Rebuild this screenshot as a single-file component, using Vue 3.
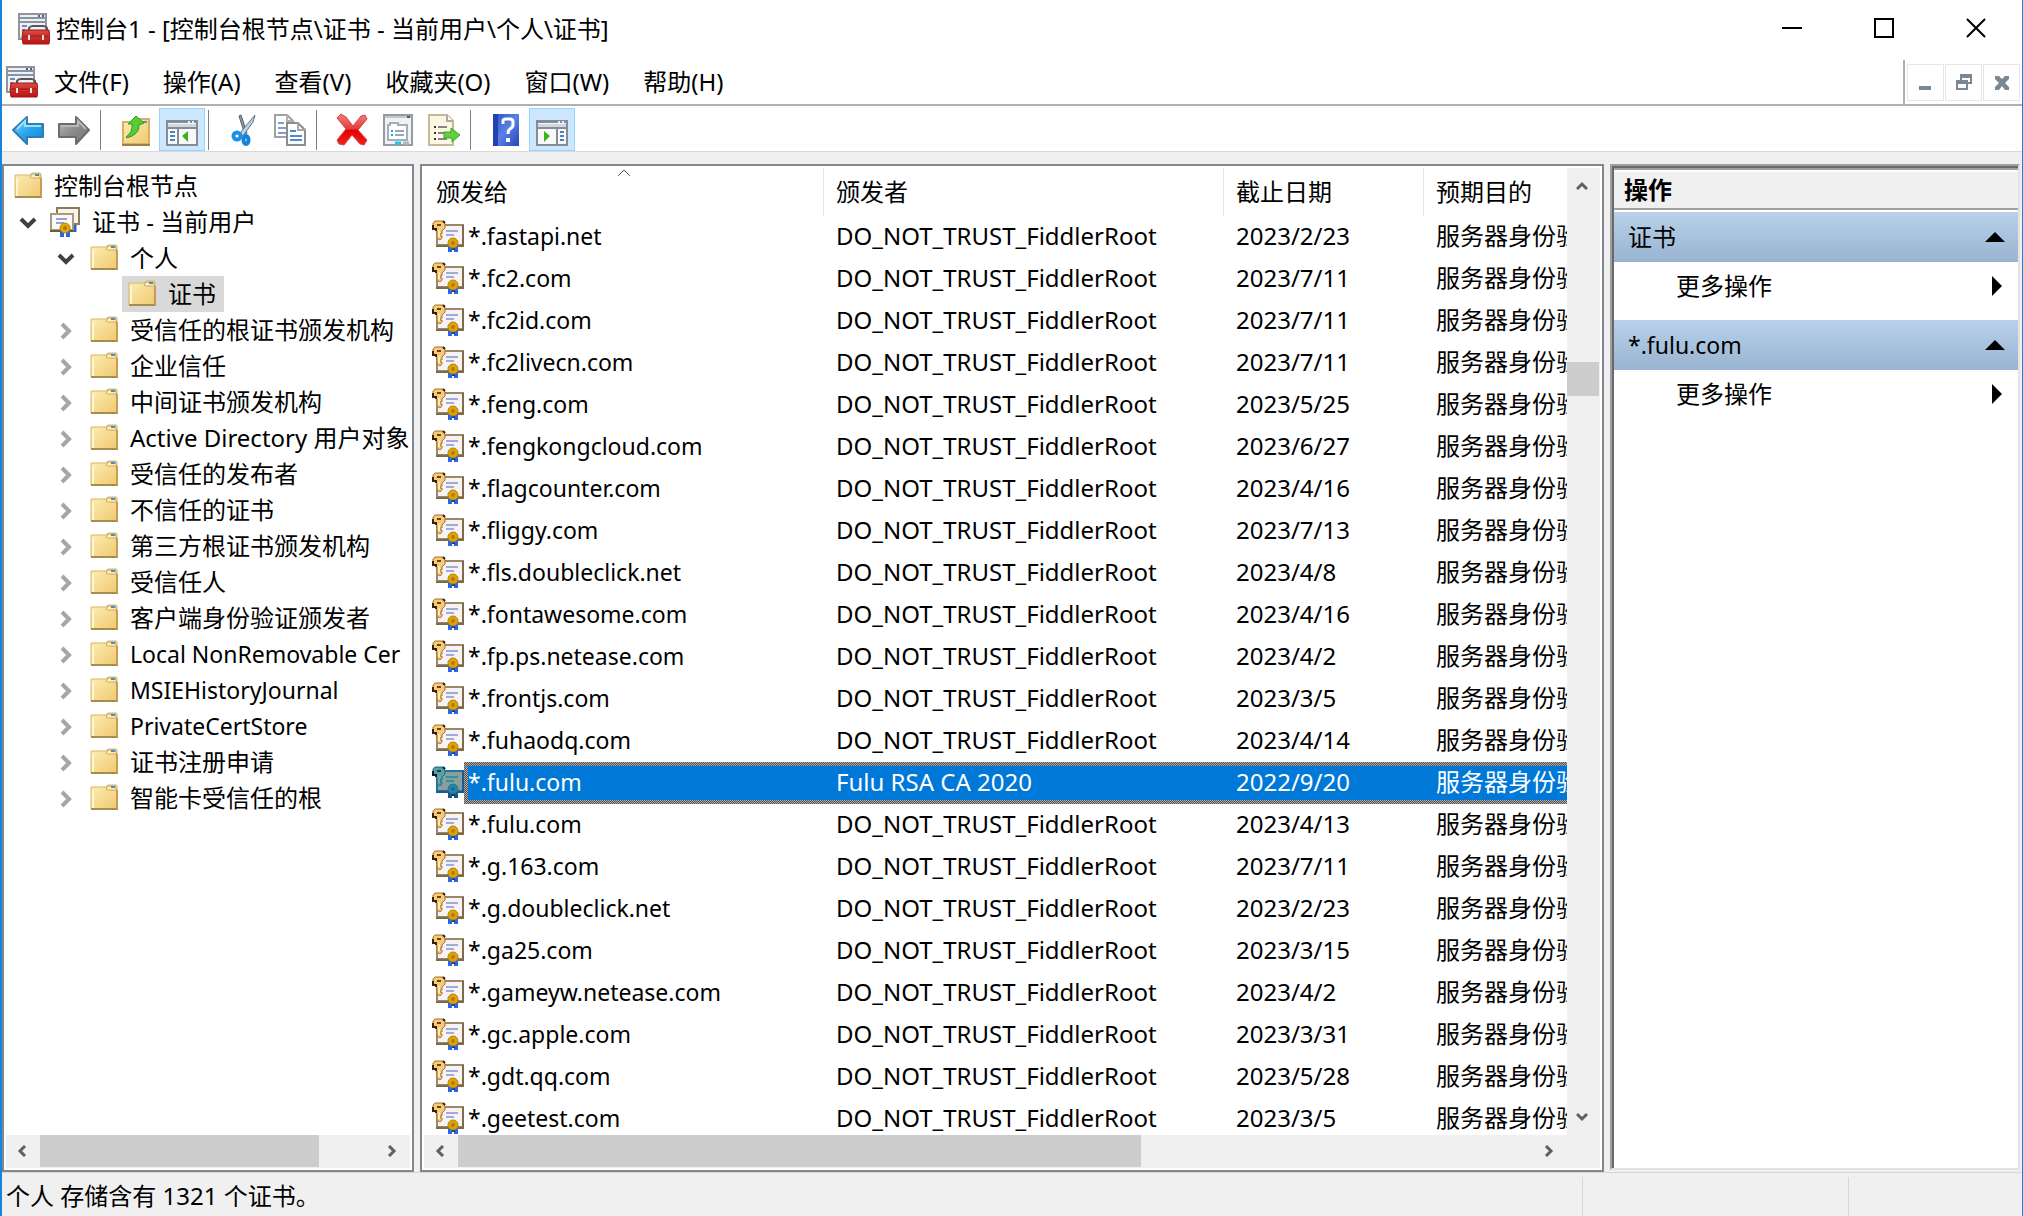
<script setup>
const menus = ['文件(F)', '操作(A)', '查看(V)', '收藏夹(O)', '窗口(W)', '帮助(H)']

const tools = [
  { icon: 'back', label: '后退' },
  { icon: 'forward', label: '前进' },
  { sep: true },
  { icon: 'up', label: '向上' },
  { icon: 'tree-pane', label: '显示/隐藏控制台树', active: true },
  { sep: true },
  { icon: 'cut', label: '剪切' },
  { icon: 'copy', label: '复制' },
  { sep: true },
  { icon: 'delete', label: '删除' },
  { icon: 'props', label: '属性' },
  { icon: 'export', label: '导出列表' },
  { sep: true },
  { icon: 'help', label: '帮助' },
  { icon: 'action-pane', label: '显示/隐藏操作窗格', active: true },
]

const tree = [
  { text: '控制台根节点', level: 0 },
  { text: '证书 - 当前用户', level: 1, open: true, icon: 'certs' },
  { text: '个人', level: 2, open: true },
  { text: '证书', level: 3, selected: true },
  ...[
    '受信任的根证书颁发机构', '企业信任', '中间证书颁发机构', 'Active Directory 用户对象',
    '受信任的发布者', '不信任的证书', '第三方根证书颁发机构', '受信任人', '客户端身份验证颁发者',
    'Local NonRemovable Cer', 'MSIEHistoryJournal', 'PrivateCertStore',
    '证书注册申请', '智能卡受信任的根',
  ].map((text) => ({ text, level: 2, closed: true })),
]

const isLatin = (text) => /^[\x20-\x7e]+$/.test(text)

const root = 'DO_NOT_TRUST_FiddlerRoot'
const certs = [
  ['*.fastapi.net', root, '2023/2/23'],
  ['*.fc2.com', root, '2023/7/11'],
  ['*.fc2id.com', root, '2023/7/11'],
  ['*.fc2livecn.com', root, '2023/7/11'],
  ['*.feng.com', root, '2023/5/25'],
  ['*.fengkongcloud.com', root, '2023/6/27'],
  ['*.flagcounter.com', root, '2023/4/16'],
  ['*.fliggy.com', root, '2023/7/13'],
  ['*.fls.doubleclick.net', root, '2023/4/8'],
  ['*.fontawesome.com', root, '2023/4/16'],
  ['*.fp.ps.netease.com', root, '2023/4/2'],
  ['*.frontjs.com', root, '2023/3/5'],
  ['*.fuhaodq.com', root, '2023/4/14'],
  ['*.fulu.com', 'Fulu RSA CA 2020', '2022/9/20'],
  ['*.fulu.com', root, '2023/4/13'],
  ['*.g.163.com', root, '2023/7/11'],
  ['*.g.doubleclick.net', root, '2023/2/23'],
  ['*.ga25.com', root, '2023/3/15'],
  ['*.gameyw.netease.com', root, '2023/4/2'],
  ['*.gc.apple.com', root, '2023/3/31'],
  ['*.gdt.qq.com', root, '2023/5/28'],
  ['*.geetest.com', root, '2023/3/5'],
]
const selectedRow = 13
const groups = ['证书', '*.fulu.com']
</script>

<template>
  <div class="window">
    <svg class="defs" aria-hidden="true">
      <defs>
        <linearGradient id="g-blue" x1="0" y1="0" x2="1" y2="1"><stop offset="0" stop-color="#8fd8fb" /><stop offset=".5" stop-color="#2ba5ee" /><stop offset="1" stop-color="#1583d2" /></linearGradient>
        <linearGradient id="g-gray" x1="0" y1="0" x2="1" y2="1"><stop offset="0" stop-color="#bdbdbd" /><stop offset=".5" stop-color="#8b8b8b" /><stop offset="1" stop-color="#777" /></linearGradient>
        <linearGradient id="g-folder" x1="0" y1="0" x2="1" y2="1"><stop offset="0" stop-color="#fdeeb5" /><stop offset="1" stop-color="#efc96f" /></linearGradient>
        <linearGradient id="g-red" x1="0" y1="0" x2="0" y2="1"><stop offset="0" stop-color="#f08080" /><stop offset=".48" stop-color="#e53b3b" /><stop offset=".52" stop-color="#e30000" /><stop offset="1" stop-color="#f02020" /></linearGradient>
        <linearGradient id="g-help" x1="0" y1="0" x2="1" y2="1"><stop offset="0" stop-color="#2a50c8" /><stop offset=".5" stop-color="#5b80e6" /><stop offset="1" stop-color="#2444b4" /></linearGradient>
        <linearGradient id="g-box" x1="0" y1="0" x2="0" y2="1"><stop offset="0" stop-color="#dc4a42" /><stop offset="1" stop-color="#b81414" /></linearGradient>
      </defs>
      <symbol id="mmc" viewBox="0 0 32 32">
        <path d="M1 1h27v25H1z" fill="#eef0f3" stroke="#8e959f" stroke-width="2" />
        <path d="M1 5h27M1 9h27" stroke="#8893a3" stroke-width="2" />
        <path d="M20 3h2m2 0h2" stroke="#506080" stroke-width="2" />
        <path d="M4 13h5m-5 4h3" stroke="#6c8cb8" stroke-width="2" />
        <path d="M11 17v-2q1-2 4-2h10q3 0 4 2v2" fill="none" stroke="#555" stroke-width="2" />
        <path d="M5 17h26l1 7-1 7H5l-1-7z" fill="url(#g-box)" stroke="#a01818" />
        <path d="M5 23h26" stroke="#a01616" />
        <path d="M11 22v5M25 22v5" stroke="#e5e5e5" stroke-width="2" />
      </symbol>
      <symbol id="folder" viewBox="0 0 28 26">
        <path d="M1 3h15l2-2h8q1 0 1 2v22H1z" fill="url(#g-folder)" stroke="#d9b566" />
        <path d="M16 5l2-3h8v4h-8z" fill="#fbf1c8" stroke="#d1a75c" />
        <path d="M21 3h4" stroke="#3f8ed0" stroke-width="2" />
        <path d="M3 6v18" stroke="#fff7d4" stroke-width="2" />
        <path d="M1 25h27" stroke="#a78d4d" stroke-width="2" />
        <path d="M27 6v19" stroke="#c49d52" stroke-width="2" />
      </symbol>
      <symbol id="certs" viewBox="0 0 30 30">
        <path d="M7 1h22v16H7z" fill="#f7f4ee" stroke="#8c7a5a" stroke-width="2" />
        <path d="M25 18v7" stroke="#2760d8" stroke-width="3" />
        <path d="M1 7h22v16H1z" fill="#fbfafa" stroke="#ad987a" stroke-width="2" />
        <path d="M0 24h24" stroke="#6e5c3c" stroke-width="2" />
        <path d="M6 12h11M6 16h8" stroke="#95a3d8" stroke-width="2" />
        <path d="M12 24v6m6-6v6" stroke="#2a64e0" stroke-width="4" />
        <circle cx="15" cy="21" r="5" fill="#e6a808" stroke="#ba8306" />
        <circle cx="15" cy="21" r="2" fill="#a67200" />
      </symbol>
      <symbol id="key-cert" viewBox="0 0 32 32">
        <path d="M5 5h26v20H5z" fill="#f5f3f3" stroke="#9c8769" stroke-width="2" />
        <path d="M31 5v21H4" fill="none" stroke="#7f6b48" stroke-width="2" />
        <path d="M14 11h12M14 15h8" stroke="#a3a9da" stroke-width="2" />
        <path d="M18 25v7m6-7v7" stroke="#2d66e2" stroke-width="4" />
        <path d="M20 27h3v3h-3z" fill="#123a91" />
        <circle cx="21" cy="23" r="5" fill="#dfa307" stroke="#b98505" />
        <circle cx="21" cy="23" r="2" fill="#b47c02" />
        <path d="M3 1h8l2 3v4l-3 3v3h-2v2h2v2L8 20 5 18v-7L1 8V3z" fill="#f7ca78" stroke="#a8702d" stroke-width="1" />
        <path d="M1 5v4h3v2M11 1l2 2" fill="none" stroke="#38220c" stroke-width="2" />
        <path d="M5 4h4v2H5z" fill="#6b4519" />
        <path d="M7 10v7" stroke="#ffe8b8" stroke-width="2" />
      </symbol>
      <symbol id="back" viewBox="0 0 32 32">
        <path d="M1 16 15 3v7h16v13H15v7z" fill="url(#g-blue)" stroke="#2d7eb7" stroke-width="2" stroke-linejoin="round" />
        <path d="M5 15 13 7v5h16" fill="none" stroke="#9ae1fc" stroke-width="2" />
      </symbol>
      <symbol id="forward" viewBox="0 0 32 32">
        <path d="M31 16 18 3v7H1v13h17v7z" fill="url(#g-gray)" stroke="#6c6c6c" stroke-width="2" stroke-linejoin="round" />
        <path d="M3 12h17V7l8 8" fill="none" stroke="#b9b9b9" stroke-width="2" />
      </symbol>
      <symbol id="up" viewBox="0 0 32 32">
        <path d="M3 8h13l3-3h10v25H3z" fill="url(#g-folder)" stroke="#d7b15c" stroke-width="2" />
        <path d="M20 8h7" stroke="#4796d2" stroke-width="2" />
        <path d="M2 31h28" stroke="#9d8140" stroke-width="2" />
        <path d="M6 23q7-5 6-13H8l8-8 8 7-5 2q1 9-12 13z" fill="#56cc36" stroke="#2f9d24" />
      </symbol>
      <symbol id="tree-pane" viewBox="0 0 32 32">
        <path d="M1 7h30v24H1z" fill="#f8f8f8" stroke="#868c96" stroke-width="2" />
        <path d="M2 10h28v3H2z" fill="#d2d8e1" /><path d="M1 8h30M1 14h30" stroke="#868c96" stroke-width="2" />
        <path d="M22 8h2m2 0h2" stroke="#e7edf5" stroke-width="2" />
        <path d="M12 14v16" stroke="#868c96" stroke-width="2" />
        <path d="M4 18h5M4 22h5M4 26h5" stroke="#4c82c4" stroke-width="2" />
        <path d="M22 17v11l-6-6z" fill="#34b51e" />
      </symbol>
      <symbol id="action-pane" viewBox="0 0 32 32">
        <path d="M1 7h30v24H1z" fill="#f8f8f8" stroke="#868c96" stroke-width="2" />
        <path d="M2 10h28v3H2z" fill="#d2d8e1" /><path d="M1 8h30M1 14h30" stroke="#868c96" stroke-width="2" />
        <path d="M22 8h2m2 0h2" stroke="#e7edf5" stroke-width="2" />
        <path d="M21 14v16" stroke="#868c96" stroke-width="2" />
        <path d="M24 18h4M24 22h4M24 26h4" stroke="#4c82c4" stroke-width="2" />
        <path d="M8 17v11l6-6z" fill="#34b51e" />
      </symbol>
      <symbol id="cut" viewBox="0 0 32 32">
        <path d="m11 2 6 19 2-2L13 1z" fill="#8b9bac" stroke="#536173" />
        <path d="M27 1 12 19l3 3L25 8z" fill="#c4d0dc" stroke="#60748c" />
        <circle cx="9" cy="22" r="3.5" fill="none" stroke="#1b92e8" stroke-width="4" />
        <ellipse cx="18" cy="26" rx="2.5" ry="4" fill="none" stroke="#1583dd" stroke-width="4" />
      </symbol>
      <symbol id="copy" viewBox="0 0 32 32">
        <path d="M1 1h12l6 6v16H1z" fill="#fff" stroke="#a0a0a0" stroke-width="2" />
        <path d="M13 1v6h6" fill="none" stroke="#b0b0b0" stroke-width="2" />
        <path d="M4 9h6M4 14h8M4 19h8" fill="none" stroke="#7e9dca" stroke-width="2" />
        <path d="M13 9h11l7 7v15H13z" fill="#fff" stroke="#8d8d8d" stroke-width="2" />
        <path d="M24 9v7h7" fill="none" stroke="#a5a5a5" stroke-width="2" />
        <path d="M16 17h6M16 22h12M16 26h12" stroke="#4f88c8" stroke-width="2" />
      </symbol>
      <symbol id="delete" viewBox="0 0 32 32">
        <path d="M1 4 5 0l5 3 7 9 8-10 4-1 2 4-9 11 9 10-3 5-4-1-8-9-8 10-5-1-2-4 9-11z" fill="url(#g-red)" stroke="#d34646" />
      </symbol>
      <symbol id="props" viewBox="0 0 32 32">
        <path d="M2 1h28v30H2z" fill="#f1f2f4" stroke="#969ba1" stroke-width="2" />
        <path d="M3 3h26" stroke="#c3c8cf" stroke-width="2" /><path d="M25 3h3" stroke="#505862" stroke-width="2" />
        <path d="M6 26V11h2V9h8v2h9v15z" fill="#fff" stroke="#a5adb7" stroke-width="2" />
        <path d="M9 17h2m-2 4h2" stroke="#14a8dc" stroke-width="2" /><path d="M13 17h9m-9 4h9" stroke="#9ca6b1" stroke-width="2" />
        <path d="M13 29h6" stroke="#20c5ef" stroke-width="3" /><path d="M21 29h6" stroke="#b5b8bb" stroke-width="3" />
      </symbol>
      <symbol id="export" viewBox="0 0 32 32">
        <path d="M1 1h18l6 6v24H1z" fill="#fcf8df" stroke="#c3b998" stroke-width="2" />
        <path d="M19 1v6h6" fill="#fff" stroke="#aaa" stroke-width="2" />
        <path d="M6 13h2m-2 6h2m-2 6h2" stroke="#333" stroke-width="2" /><path d="M10 13h9m-9 6h6m-6 6h9" stroke="#887f99" stroke-width="2" />
        <path d="M16 18h7v-4l9 7-8 7v-4h-8z" fill="#64ce42" stroke="#36a825" />
      </symbol>
      <symbol id="help" viewBox="0 0 32 32">
        <path d="M3 0h26v32H3z" fill="url(#g-help)" /><path d="M3 0h5v32H3z" fill="#2342ae" />
        <path d="M13 10V7q0-2 3-2h4q3 0 3 3v3q0 2-3 4-2 1-2 5" fill="none" stroke="#fff" stroke-width="3" />
        <path d="M16 24h4v4h-4z" fill="#fff" />
      </symbol>
    </svg>

    <header class="titlebar">
      <svg class="i32"><use href="#mmc" /></svg>
      <h1>控制台1 - [控制台根节点\证书 - 当前用户\个人\证书]</h1>
      <div class="caption">
        <button aria-label="最小化"><svg viewBox="0 0 20 20"><path d="M0 10h20" /></svg></button>
        <button aria-label="最大化"><svg viewBox="0 0 20 20"><path d="M1 1h18v18H1z" /></svg></button>
        <button aria-label="关闭"><svg viewBox="0 0 20 20"><path d="m1 1 18 18M19 1 1 19" /></svg></button>
      </div>
    </header>

    <nav class="menubar">
      <svg class="i32"><use href="#mmc" /></svg>
      <div class="menus">
        <button v-for="m in menus" :key="m">{{ m }}</button>
      </div>
      <div class="mdi">
        <button aria-label="最小化子窗口"><svg viewBox="0 0 16 16"><path d="M1 12h12v4H1z" /></svg></button>
        <button aria-label="还原子窗口"><svg viewBox="0 0 16 16"><path d="M4 0h12v10h-4V8h2V4H6v2H4zM0 6h12v10H0zm2 4v4h8v-4z" fill-rule="evenodd" /></svg></button>
        <button aria-label="关闭子窗口"><svg viewBox="0 0 16 16"><path d="M1 2h4l3 3 3-3h4v3l-4 4 4 4v3h-4l-3-4-3 4H1v-3l4-4-4-4z" /></svg></button>
      </div>
    </nav>

    <div class="toolbar">
      <template v-for="(t, i) in tools" :key="i">
        <span v-if="t.sep" class="sep"></span>
        <button v-else class="tool" :class="{ active: t.active }" :aria-label="t.label">
          <svg class="i32"><use :href="'#' + t.icon" /></svg>
        </button>
      </template>
    </div>

    <main class="body">
      <section class="pane tree-pane">
        <ul class="tree">
          <li v-for="n in tree" :key="n.text + n.level" :class="'lv' + n.level">
            <button v-if="n.open || n.closed" class="twisty" :class="{ closed: n.closed }" aria-label="展开或折叠">
              <svg v-if="n.open" viewBox="0 0 18 12"><path d="m2 2 7 7 7-7" /></svg>
              <svg v-else viewBox="0 0 12 18"><path d="m2 2 7 7-7 7" /></svg>
            </button>
            <span class="node" :class="{ selected: n.selected }">
              <svg v-if="n.icon" class="certs"><use href="#certs" /></svg>
              <svg v-else class="folder"><use href="#folder" /></svg>
              <span :class="{ latin: isLatin(n.text) }">{{ n.text }}</span>
            </span>
          </li>
        </ul>
        <div class="hscroll">
          <button aria-label="向左滚动"><svg viewBox="0 0 10 12"><path d="M8 1 3 6l5 5" /></svg></button>
          <div class="track"><div class="thumb tree-thumb"></div></div>
          <button aria-label="向右滚动"><svg viewBox="0 0 10 12"><path d="m2 1 5 5-5 5" /></svg></button>
        </div>
      </section>

      <section class="pane list-pane">
        <div class="list-area">
          <div class="list">
            <table>
              <colgroup><col class="c-name" /><col class="c-name" /><col class="c-date" /><col /></colgroup>
              <thead>
                <tr>
                  <th>颁发给<svg class="sort" viewBox="0 0 14 8"><path d="m1 7 6-6 6 6" /></svg></th>
                  <th>颁发者</th>
                  <th>截止日期</th>
                  <th>预期目的</th>
                </tr>
              </thead>
              <tbody>
                <tr v-for="(c, i) in certs" :key="i" :class="{ selected: i === selectedRow }">
                  <td class="name">
                    <div><svg class="i32"><use href="#key-cert" /></svg><span class="latin">{{ c[0] }}</span></div>
                  </td>
                  <td>{{ c[1] }}</td>
                  <td>{{ c[2] }}</td>
                  <td>服务器身份验证</td>
                </tr>
              </tbody>
            </table>
          </div>
          <div class="vscroll">
            <button aria-label="向上滚动"><svg viewBox="0 0 12 10"><path d="m1 8 5-5 5 5" /></svg></button>
            <div class="vtrack"><div class="vthumb"></div></div>
            <button aria-label="向下滚动"><svg viewBox="0 0 12 10"><path d="m1 2 5 5 5-5" /></svg></button>
          </div>
        </div>
        <div class="hscroll corner">
          <button aria-label="向左滚动"><svg viewBox="0 0 10 12"><path d="M8 1 3 6l5 5" /></svg></button>
          <div class="track"><div class="thumb list-thumb"></div></div>
          <button aria-label="向右滚动"><svg viewBox="0 0 10 12"><path d="m2 1 5 5-5 5" /></svg></button>
        </div>
      </section>

      <aside class="actions">
        <h2>操作</h2>
        <section v-for="g in groups" :key="g">
          <h3><span :class="{ latin: isLatin(g) }">{{ g }}</span><svg viewBox="0 0 20 10"><path d="M0 10 10 0l10 10z" /></svg></h3>
          <button class="more">更多操作<svg viewBox="0 0 10 20"><path d="m0 0 10 10L0 20z" /></svg></button>
        </section>
      </aside>
    </main>

    <footer class="status">
      <span class="msg">个人 存储含有 1321 个证书。</span>
      <span class="cell"></span>
      <span class="cell last"></span>
    </footer>
  </div>
</template>

<style>
body {
  margin: 0;
}
</style>

<style scoped>
* {
  box-sizing: border-box;
}
.window {
  height: 100vh;
  display: flex;
  flex-direction: column;
  overflow: hidden;
  border-left: 2px solid #1883d7;
  border-right: 1px solid #1883d7;
  background: #fff;
  color: #000;
  font: 24px/36px "Noto Sans", "Noto Sans CJK SC", sans-serif;
}
.latin {
  font-size: 23px;
}
.defs {
  position: absolute;
  width: 0;
  height: 0;
}
button {
  display: flex;
  align-items: center;
  justify-content: center;
  padding: 0;
  border: 0;
  background: none;
  color: inherit;
  font: inherit;
}
svg {
  flex: none;
}
.i32 {
  width: 32px;
  height: 32px;
}
.titlebar {
  flex: none;
  display: flex;
  align-items: center;
  gap: 6px;
  height: 60px;
  padding: 0 0 2px 16px;
}
h1 {
  margin: 0;
  font-size: 24px;
  font-weight: 400;
  white-space: nowrap;
}
.caption {
  display: flex;
  align-self: flex-start;
  height: 56px;
  margin-left: auto;
}
.caption button {
  width: 92px;
}
.caption svg {
  width: 20px;
  height: 20px;
  fill: none;
  stroke: #000;
  stroke-width: 2;
}
.menubar {
  flex: none;
  display: flex;
  align-items: center;
  gap: 16px;
  height: 46px;
  padding-left: 4px;
  border-bottom: 2px solid #b0b0b0;
}
.menus {
  display: flex;
  gap: 34px;
  white-space: nowrap;
}
.mdi {
  display: flex;
  align-items: center;
  align-self: stretch;
  gap: 1px;
  margin-left: auto;
  padding: 0 2px;
  border-left: 2px solid #b0b0b0;
}
.mdi button {
  width: 37px;
  height: 37px;
  border: 1px solid #e6e6e6;
}
.mdi svg {
  width: 16px;
  height: 16px;
  fill: #7c8795;
}
.toolbar {
  flex: none;
  display: flex;
  align-items: center;
  height: 46px;
  padding: 2px 0 0 3px;
  border-bottom: 1px solid #d9d9d9;
}
.tool {
  width: 46px;
  height: 43px;
}
.tool.active {
  background: #cce8ff;
  border: 1px solid #99d1ff;
}
.sep {
  width: 1px;
  height: 40px;
  margin: 0 12px 0 3px;
  background: #808080;
}
.body {
  flex: 1;
  min-height: 0;
  display: flex;
  gap: 6px;
  padding: 12px 2px 0 0;
  background: #f0f0f0;
}
.pane {
  display: flex;
  flex-direction: column;
  min-width: 0;
  padding: 2px;
  border: 2px solid #828790;
  background: #fff;
}
.tree-pane {
  flex: 0 0 412px;
}
.tree {
  flex: 1;
  min-height: 0;
  margin: 0;
  padding: 0;
  overflow: hidden;
  list-style: none;
}
.tree li {
  display: flex;
  height: 36px;
  white-space: nowrap;
}
.lv0 {
  padding-left: 2px;
}
.lv1 {
  padding-left: 6px;
}
.lv2 {
  padding-left: 44px;
}
.lv3 {
  padding-left: 116px;
}
.twisty {
  flex: none;
  width: 32px;
  margin-right: 2px;
  padding-top: 2px;
}
.twisty svg {
  width: 18px;
  height: 12px;
  fill: none;
  stroke: #404040;
  stroke-width: 4;
}
.twisty.closed svg {
  width: 12px;
  height: 18px;
  stroke: #a6a6a6;
}
.node {
  flex: none;
  display: flex;
  align-items: center;
  gap: 12px;
  padding: 0 8px 0 6px;
}
.lv1 .node {
  padding-left: 4px;
}
.node.selected {
  background: #d9d9d9;
}
.folder {
  width: 28px;
  height: 26px;
  margin-bottom: 2px;
}
.certs {
  width: 30px;
  height: 30px;
}
.hscroll {
  flex: none;
  display: flex;
  height: 33px;
  background: #f0f0f0;
}
.hscroll.corner {
  padding-right: 33px;
}
.hscroll button {
  width: 34px;
  padding: 0 3px 2px 0;
}
.hscroll svg {
  width: 10px;
  height: 12px;
}
.hscroll svg,
.vscroll svg {
  fill: none;
  stroke: #606060;
  stroke-width: 3;
}
.track {
  flex: 1;
}
.thumb {
  height: 32px;
  background: #cdcdcd;
}
.tree-thumb {
  width: 83%;
}
.list-thumb {
  width: 63.5%;
}
.list-pane {
  flex: 1;
}
.list-area {
  flex: 1;
  min-height: 0;
  display: flex;
}
.list {
  flex: 1;
  min-width: 0;
  overflow: hidden;
}
table {
  width: 100%;
  table-layout: fixed;
  border-spacing: 0;
}
.c-name {
  width: 400px;
}
.c-date {
  width: 200px;
}
th {
  position: relative;
  height: 48px;
  padding: 0 12px;
  border-right: 1px solid #e5e5e5;
  font-weight: 400;
  text-align: left;
  white-space: nowrap;
}
th:last-child {
  border-right: 0;
}
.sort {
  position: absolute;
  top: 1px;
  left: calc(50% - 7px);
  width: 14px;
  height: 8px;
  fill: none;
  stroke: #555;
}
td {
  height: 42px;
  padding: 0 12px 2px;
  overflow: hidden;
  white-space: nowrap;
  line-height: 32px;
}
td.name {
  padding: 0 0 0 8px;
}
td.name div {
  display: flex;
  align-items: center;
}
td.name svg {
  margin-bottom: 2px;
}
td.name span {
  flex: 1;
  height: 42px;
  padding-left: 4px;
  line-height: 40px;
}
.selected td {
  color: #fff;
}
.selected td:not(.name),
.selected td.name span {
  border: 4px solid transparent;
  border-width: 4px 0;
  background:
    linear-gradient(#0078d7, #0078d7) padding-box,
    repeating-conic-gradient(#555 0 25%, #aaa 0 50%) 0 0 / 2px 2px border-box;
}
.selected td.name span {
  border-left-width: 4px;
  padding-left: 0;
  line-height: 32px;
}
.selected td.name svg {
  filter: sepia(1) hue-rotate(165deg) saturate(4) brightness(0.62);
}
.vscroll {
  flex: none;
  display: flex;
  flex-direction: column;
  width: 33px;
  background: #f0f0f0;
}
.vscroll button {
  height: 36px;
  padding-right: 3px;
}
.vscroll svg {
  width: 12px;
  height: 10px;
}
.vtrack {
  flex: 1;
  display: flex;
  flex-direction: column;
}
.vtrack::before {
  content: "";
  height: 17.6%;
}
.vthumb {
  width: 32px;
  height: 34px;
  background: #cdcdcd;
}
.actions {
  flex: 0 0 410px;
  margin-bottom: 2px;
  border: 2px solid;
  border-color: #a0a0a0 #e3e3e3 #e3e3e3 #a0a0a0;
  box-shadow: inset 2px 2px #696969;
  padding: 2px 0 0 2px;
  background: #fff;
}
h2 {
  height: 42px;
  margin: 0 0 2px;
  padding-left: 10px;
  border-top: 2px solid #a0a0a0;
  border-bottom: 2px solid #a0a0a0;
  background: #f0f0f0;
  box-shadow: inset 0 2px #fff;
  font-size: 24px;
  line-height: 40px;
}
h3 {
  display: flex;
  align-items: center;
  justify-content: space-between;
  height: 50px;
  margin: 0;
  padding: 0 13px 0 14px;
  background: linear-gradient(#b9d1ea, #99b4d1);
  font-size: 24px;
  font-weight: 400;
}
h3 svg {
  width: 20px;
  height: 10px;
}
.more {
  justify-content: space-between;
  width: 100%;
  height: 50px;
  margin-bottom: 8px;
  padding: 0 16px 2px 62px;
}
.more svg {
  width: 10px;
  height: 20px;
}
.status {
  flex: none;
  display: flex;
  height: 44px;
  padding-top: 4px;
  border-top: 1px solid #d7d7d7;
  background: #f0f0f0;
}
.msg {
  flex: 1;
  padding-left: 4px;
  line-height: 38px;
}
.cell {
  width: 266px;
  border-left: 1px solid #d7d7d7;
}
.cell.last {
  width: 174px;
}
</style>
